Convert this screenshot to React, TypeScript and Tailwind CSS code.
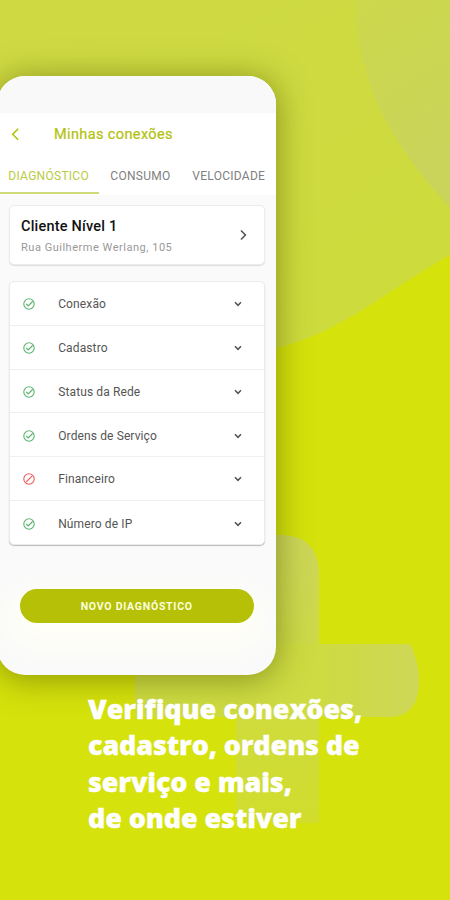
import clsx from "clsx";

const tabs = [
  { label: "DIAGNÓSTICO", className: "ml-[11.3px] w-[81px] text-[#b9cb3f] tracking-[0.28px]" },
  { label: "CONSUMO", className: "ml-[21px] w-[60px] text-[#808080] tracking-[0.27px]" },
  { label: "VELOCIDADE", className: "ml-[22px] w-[74px] text-[#808080] tracking-[0.27px]" },
];

const items = [
  { label: "Conexão", ok: true },
  { label: "Cadastro", ok: true },
  { label: "Status da Rede", ok: true },
  { label: "Ordens de Serviço", ok: true },
  { label: "Financeiro", ok: false },
  { label: "Número de IP", ok: true },
];

const headline = [
  { text: "Verifique conexões,", className: "tracking-[-0.08px]" },
  { text: "cadastro, ordens de", className: "tracking-[-0.14px]" },
  { text: "serviço e mais,", className: "tracking-[-0.14px]" },
  { text: "de onde estiver", className: "tracking-[-0.12px]" },
];

function Backdrop() {
  return (
    <svg className="absolute inset-0 h-full w-full" viewBox="0 0 450 900" fill="none">
      <defs>
        <linearGradient id="wave" x1="120" y1="0" x2="330" y2="340" gradientUnits="userSpaceOnUse">
          <stop stopColor="#cfda43" />
          <stop offset="1" stopColor="#cedb3c" />
        </linearGradient>
        <linearGradient id="leaf" x1="360" y1="0" x2="450" y2="150" gradientUnits="userSpaceOnUse">
          <stop stopColor="#cdd84c" />
          <stop offset="1" stopColor="#cad45a" />
        </linearGradient>
        <linearGradient id="plusV" x1="0" y1="535" x2="0" y2="825" gradientUnits="userSpaceOnUse">
          <stop stopColor="#cdd65a" />
          <stop offset="0.5" stopColor="#cedb42" />
          <stop offset="1" stopColor="#d1dd2c" />
        </linearGradient>
        <linearGradient id="plusH" x1="320" y1="0" x2="420" y2="0" gradientUnits="userSpaceOnUse">
          <stop stopColor="#cedb42" />
          <stop offset="1" stopColor="#cfd757" />
        </linearGradient>
      </defs>
      <path d="M0 0H450V255C390 288 340 334 276 348H0Z" fill="url(#wave)" />
      <path d="M356 0C356 82 391 143 450 208V0Z" fill="url(#leaf)" />
      <path d="M236 535H280C306 535 319 549 319 575V823H236Z" fill="url(#plusV)" />
      <path d="M135 644H410C415 653 419 667 419 681C419 705 409 717 388 717H135Z" fill="url(#plusH)" />
    </svg>
  );
}

function StatusIcon({ ok }: { ok: boolean }) {
  return (
    <svg
      className={clsx("h-3 w-3", ok ? "text-[#5cb56c]" : "text-[#f0595c]")}
      viewBox="0 0 12 12"
      fill="none"
      stroke="currentColor"
    >
      <circle cx="6" cy="6" r="5.2" strokeWidth="1.1" />
      {ok ? (
        <path d="M3.2 5.9 5.2 7.9 9.6 3.5" strokeWidth="1.2" />
      ) : (
        <path d="M3.2 8.8 8.9 3.1" strokeWidth="1.2" />
      )}
    </svg>
  );
}

function Chevron({ className, d }: { className: string; d: string }) {
  return (
    <svg className={className} viewBox="0 0 12 14" fill="none" stroke="currentColor" strokeWidth="1.6">
      <path d={d} />
    </svg>
  );
}

function Phone() {
  return (
    <div className="-ml-[3px] h-[599px] w-[279px] overflow-hidden rounded-[28px] bg-[#fafafa] shadow-[0_3px_32px_2px_rgba(80,90,0,0.52)]">
      <div className="h-[37px] bg-[#f9f9f9]" />
      <div className="flex h-[42px] items-center bg-white pt-px text-[#b1c20d]">
        <Chevron className="ml-[12px] h-[14px] w-3" d="M9.2 0.8 3.7 6.3 9.2 11.8" />
        <h1 className="ml-[33px] text-[14.5px] font-normal tracking-[0.38px] [-webkit-text-stroke:0.2px_#b1c20d]">
          Minhas conexões
        </h1>
      </div>
      <div className="relative flex h-[40px] items-center bg-white pt-[1px] text-[12px]">
        {tabs.map((tab) => (
          <span key={tab.label} className={clsx("shrink-0 whitespace-nowrap", tab.className)}>
            {tab.label}
          </span>
        ))}
        <span className="absolute bottom-[1px] left-0 h-[2px] w-[102px] bg-[#cfdb78]" />
      </div>

      <div className="mt-[10px] ml-[12px] flex h-[60px] w-[256px] items-center rounded-[5px] border border-[#ebebeb] bg-white pl-[11px] shadow-[0_1px_1px_#ddd]">
        <div className="w-[216px] pt-[4px]">
          <div className="text-[14.5px] leading-[19px] font-medium tracking-[0.2px] text-[#111]">Cliente Nível 1</div>
          <div className="mt-[3px] text-[11px] leading-[18px] tracking-[0.52px] text-[#999]">Rua Guilherme Werlang, 105</div>
        </div>
        <Chevron className="h-[14px] w-3 text-[#555]" d="M4 2.5 8.4 7 4 11.5" />
      </div>

      <div className="mt-[16px] ml-[12px] h-[264px] w-[256px] rounded-[5px] border border-[#ebebeb] bg-white shadow-[0_1px_1px_#bbb]">
        {items.map((item) => (
          <div
            key={item.label}
            className="flex h-[43.8px] items-center border-b border-[#efefef] pt-[1.5px] pl-[12.5px] last:border-b-0"
          >
            <StatusIcon ok={item.ok} />
            <span className="ml-[23.7px] w-[142px] text-[12px] tracking-[0.12px] text-[#555]">{item.label}</span>
            <Chevron className="ml-[31.8px] h-[14px] w-3 text-[#555]" d="M3 5.3 6 8.3 9 5.3" />
          </div>
        ))}
      </div>

      <button className="mt-[44px] ml-[22.5px] flex h-[34px] w-[234.5px] items-center justify-center rounded-full bg-[#b5c007] pt-[2px] text-[10.5px] font-bold tracking-[0.75px] text-[#fcffdf] shadow-[0_14px_30px_10px_#fffff6]">
        NOVO DIAGNÓSTICO
      </button>
    </div>
  );
}

export default function App() {
  return (
    <main className="relative h-[900px] w-[450px] overflow-hidden bg-[#d5e20b] font-['Roboto',sans-serif]">
      <Backdrop />
      <div className="relative pt-[76px]">
        <Phone />
        <div className="mt-[15.5px] ml-[88px] font-['Open_Sans',sans-serif] text-[27px] leading-[36.6px] font-extrabold whitespace-nowrap text-white [-webkit-text-stroke:0.3px_white]">
          {headline.map((line) => (
            <div key={line.text} className={line.className}>
              {line.text}
            </div>
          ))}
        </div>
      </div>
    </main>
  );
}
